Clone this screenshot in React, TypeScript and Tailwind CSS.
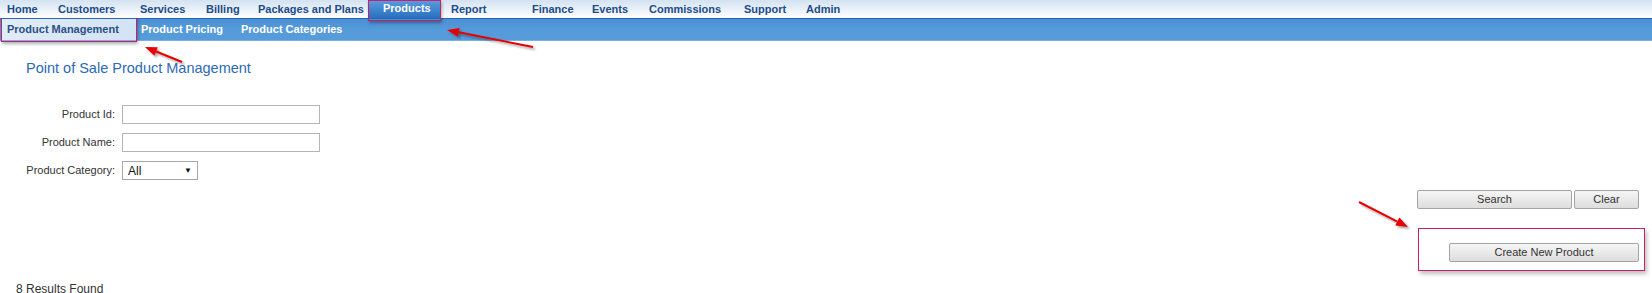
import React from "react";

type Pt = [number, number];

function Arrow({ tail, head }: { tail: Pt; head: Pt }) {
  const dx = head[0] - tail[0];
  const dy = head[1] - tail[1];
  const len = Math.hypot(dx, dy);
  const ux = dx / len;
  const uy = dy / len;
  const hl = 12;
  const hw = 4.5;
  const bx = head[0] - ux * hl;
  const by = head[1] - uy * hl;
  const p1: Pt = [bx - uy * hw, by + ux * hw];
  const p2: Pt = [bx + uy * hw, by - ux * hw];
  return (
    <g filter="url(#ashadow)">
      <line x1={tail[0]} y1={tail[1]} x2={bx} y2={by} stroke="#e60000" strokeWidth={2} />
      <polygon points={`${head[0]},${head[1]} ${p1[0]},${p1[1]} ${p2[0]},${p2[1]}`} fill="#e60000" />
    </g>
  );
}

const topItems: { label: string; w: string }[] = [
  { label: "Home", w: "w-[51px]" },
  { label: "Customers", w: "w-[82px]" },
  { label: "Services", w: "w-[66px]" },
  { label: "Billing", w: "w-[52px]" },
  { label: "Packages and Plans", w: "w-[110px]" },
];
const topItems2: { label: string; w: string }[] = [
  { label: "Report", w: "w-[81px]" },
  { label: "Finance", w: "w-[60px]" },
  { label: "Events", w: "w-[57px]" },
  { label: "Commissions", w: "w-[95px]" },
  { label: "Support", w: "w-[62px]" },
  { label: "Admin", w: "w-[60px]" },
];

export default function App() {
  return (
    <div
      className="relative w-full h-[293px] overflow-hidden bg-white"
      style={{ fontFamily: '"Liberation Sans", Arial, sans-serif' }}
    >
      {/* Top nav */}
      <div className="relative z-10 flex h-[18px] items-center bg-gradient-to-b from-[#d3e2f1] to-white pl-[7px] text-[11px] font-bold text-[#1d4c88]">
        {topItems.map((it) => (
          <div key={it.label} className={`${it.w} shrink-0 whitespace-nowrap leading-[17px]`}>
            {it.label}
          </div>
        ))}
        <div className="relative w-[73px] h-[18px] shrink-0 self-start bg-gradient-to-b from-[#5a9ddf] to-[#2a70bf] pl-[15px] leading-[17px] text-white">
          Products
          <div className="absolute left-0 top-0 w-[73px] h-[21px] border border-[#c6206a] shadow-[1px_2px_3px_rgba(0,0,0,0.3)]" />
        </div>
        <div className="w-[10px] shrink-0" />
        {topItems2.map((it) => (
          <div key={it.label} className={`${it.w} shrink-0 whitespace-nowrap leading-[17px]`}>
            {it.label}
          </div>
        ))}
      </div>

      {/* Sub nav */}
      <div className="flex h-[23px] border-t border-t-[#2a69b1] border-b border-b-[#79b1e5] bg-gradient-to-b from-[#4a8fd4] via-[#559bda] to-[#569cda] text-[11px] font-bold text-white">
        <div className="relative ml-[2px] flex w-[134px] shrink-0 items-center bg-gradient-to-r from-[#e0ecf7] to-[#d3e3f3] pl-[5px] text-[#2b4f86]">
          Product Management
          <div className="absolute left-[-1px] top-[-3px] w-[136px] h-[26px] border border-[#c6206a] shadow-[1px_2px_3px_rgba(0,0,0,0.3)]" />
        </div>
        <div className="flex w-[100px] shrink-0 items-center pl-[5px]">Product Pricing</div>
        <div className="flex shrink-0 items-center pl-[5px]">Product Categories</div>
      </div>

      {/* Title */}
      <div className="mt-[19px] pl-[26px] text-[14.5px] leading-[17px] text-[#2c6ab5]">
        Point of Sale Product Management
      </div>

      {/* Form */}
      <div className="mt-[28px] grid grid-cols-[115px_auto] gap-x-[7px] gap-y-[9px] text-[11px] text-[#333]">
        <div className="flex h-[19px] items-center justify-end">Product Id:</div>
        <div>
          <input className="block h-[19px] w-[198px] border border-[#b5b5b5] bg-white outline-none" />
        </div>
        <div className="flex h-[19px] items-center justify-end">Product Name:</div>
        <div>
          <input className="block h-[19px] w-[198px] border border-[#b5b5b5] bg-white outline-none" />
        </div>
        <div className="flex h-[19px] items-center justify-end">Product Category:</div>
        <div className="flex h-[19px] w-[76px] items-center justify-between border border-[#a8a8a8] bg-white pl-[5px] pr-[5px] text-[12px] text-[#111]">
          <span>All</span>
          <span className="text-[8px] leading-none">▼</span>
        </div>
      </div>

      {/* Search / Clear */}
      <div className="mt-[10px] flex justify-end gap-[2px] pr-[13px]">
        <button className="h-[19px] w-[155px] rounded-[2px] border border-[#a3a3a3] bg-gradient-to-b from-[#f6f6f6] to-[#dddddd] text-[11px] leading-none text-[#333]">
          Search
        </button>
        <button className="h-[19px] w-[65px] rounded-[2px] border border-[#a3a3a3] bg-gradient-to-b from-[#f6f6f6] to-[#dddddd] text-[11px] leading-none text-[#333]">
          Clear
        </button>
      </div>

      {/* Create new product box */}
      <div className="mt-[19px] flex justify-end pr-[7px]">
        <div className="flex h-[43px] w-[227px] items-start justify-end border border-[#c6206a] pr-[5px] pt-[14px] shadow-[2px_3px_4px_rgba(0,0,0,0.25)]">
          <button className="h-[19px] w-[190px] rounded-[2px] border border-[#a3a3a3] bg-gradient-to-b from-[#f6f6f6] to-[#dddddd] text-[11px] leading-none text-[#333]">
            Create New Product
          </button>
        </div>
      </div>

      {/* Results */}
      <div className="mt-[11px] pl-[16px] text-[12px] leading-[14px] text-[#333]">8 Results Found</div>

      {/* Annotation arrows */}
      <svg className="pointer-events-none absolute left-0 top-0 z-20" width="1652" height="293">
        <defs>
          <filter id="ashadow" x="-20%" y="-50%" width="140%" height="200%">
            <feDropShadow dx="2" dy="2" stdDeviation="1.2" floodColor="#000" floodOpacity="0.35" />
          </filter>
        </defs>
        <Arrow tail={[182, 62]} head={[145, 47]} />
        <Arrow tail={[533, 47]} head={[447, 30]} />
        <Arrow tail={[1359, 202]} head={[1408, 227]} />
      </svg>
    </div>
  );
}
